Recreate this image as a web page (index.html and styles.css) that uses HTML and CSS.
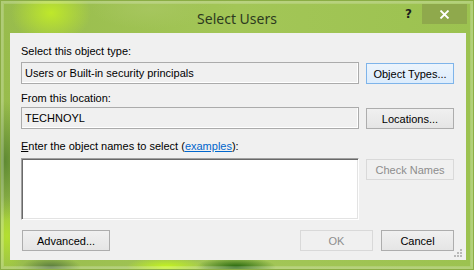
FILE: index.html
```html
<!DOCTYPE html>
<html lang="en">
<head>
    <meta charset="UTF-8">
    <title>Select Users</title>
    <link rel="stylesheet" href="styles.css">
</head>
<body>
    <div class="window">
        <div class="titlebar">
            <div></div>
            <div class="title">Select Users</div>
            <div class="controls">
                <span class="help">?</span>
                <span class="close">
                    <svg width="11" height="9" viewBox="0 0 11 9">
                        <path d="M1.5 0.5 L9.5 8.5 M9.5 0.5 L1.5 8.5" stroke="#fff" stroke-width="1.8" fill="none"/>
                    </svg>
                </span>
            </div>
        </div>

        <div class="client">
            <div class="label first">Select this object type:</div>
            <div class="row">
                <div class="field">Users or Built-in security principals</div>
                <button class="btn focused">Object Types...</button>
            </div>

            <div class="label second">From this location:</div>
            <div class="row">
                <div class="field">TECHNOYL</div>
                <button class="btn">Locations...</button>
            </div>

            <div class="label third"><u>E</u>nter the object names to select (<a href="#">examples</a>):</div>
            <div class="row">
                <div class="names"></div>
                <button class="btn" disabled>Check Names</button>
            </div>

            <div class="footer">
                <button class="btn advanced">Advanced...</button>
                <div class="actions">
                    <button class="btn small" disabled>OK</button>
                    <button class="btn small">Cancel</button>
                </div>
            </div>

            <svg class="grip" width="9" height="9" viewBox="0 0 9 9">
                <rect x="6" y="0" width="2" height="2" fill="#b9b9b9"/>
                <rect x="3" y="3" width="2" height="2" fill="#b9b9b9"/>
                <rect x="6" y="3" width="2" height="2" fill="#b9b9b9"/>
                <rect x="0" y="6" width="2" height="2" fill="#b9b9b9"/>
                <rect x="3" y="6" width="2" height="2" fill="#b9b9b9"/>
                <rect x="6" y="6" width="2" height="2" fill="#b9b9b9"/>
            </svg>
        </div>
    </div>
</body>
</html>
```

FILE: styles.css
```css
body {
    margin: 0;
    font-family: "Liberation Sans", Arial, sans-serif;
    font-size: 11px;
    color: #000;
}
.window {
    width: 474px;
    height: 270px;
    box-sizing: border-box;
    display: flex;
    flex-direction: column;
    /* fond vert Windows 8 */
    background:
        radial-gradient(ellipse 40px 30px at 50px 12px, #bfe82a, rgba(191, 232, 42, 0)),
        radial-gradient(ellipse 22px 60px at 4px 160px, #5f8a32, rgba(95, 138, 50, 0)),
        radial-gradient(ellipse 20px 40px at 6px 235px, #b4e030, rgba(180, 224, 48, 0)),
        radial-gradient(ellipse 30px 10px at 50px 266px, #587a3c, rgba(88, 122, 60, 0)),
        radial-gradient(ellipse 40px 10px at 165px 266px, #c4f41e, rgba(196, 244, 30, 0)),
        radial-gradient(ellipse 40px 10px at 235px 266px, #23640a, rgba(35, 100, 10, 0)),
        radial-gradient(ellipse 60px 20px at 150px 8px, #a6c65e, rgba(166, 198, 94, 0)),
        linear-gradient(90deg, #98bc4c, #a3c657 50%, #9cc250);
    border: 1px solid #8aad44;
    box-shadow: inset 0 0 0 2px rgba(255, 255, 255, 0.08), inset 0 0 0 3px rgba(255, 255, 255, 0.18);
}
.titlebar {
    height: 32px;
    display: grid;
    grid-template-columns: 1fr auto 1fr;
}
.title {
    font-family: "Noto Sans", sans-serif;
    font-size: 14px;
    color: #2d3a1f;
    padding-top: 8px;
}
.controls {
    display: flex;
    justify-content: flex-end;
    align-items: flex-start;
    padding-right: 6px;
}
.help {
    font-family: "DejaVu Sans", sans-serif;
    font-weight: bold;
    font-size: 12px;
    color: #1d1d1d;
    margin-top: 6px;
    margin-right: 10px;
}
.close {
    width: 45px;
    height: 20px;
    margin-top: 3px;
    background-color: #8fa94c;
    display: flex;
    justify-content: center;
    align-items: center;
}
.client {
    flex: 1;
    margin: 0 7px 9px 9px;
    padding: 12px 12px 0 11px;
    background-color: #f0f0f0;
    position: relative;
}
.label {
    line-height: 13px;
}
.label.first {
    margin-bottom: 4px;
}
.label.second {
    margin-top: 8px;
    margin-bottom: 2px;
}
.label.third {
    margin-top: 11px;
    margin-bottom: 5px;
}
.label a {
    color: #0066cc;
}
.row {
    display: flex;
    align-items: flex-start;
    gap: 7px;
}
.field {
    width: 338px;
    height: 22px;
    box-sizing: border-box;
    border: 1px solid #ababab;
    box-shadow: inset -1px -1px 0 #fff;
    padding: 3px 3px;
    line-height: 14px;
}
.names {
    width: 338px;
    height: 62px;
    box-sizing: border-box;
    background-color: #fff;
    border-top: 1px solid #a0a0a0;
    border-left: 1px solid #a0a0a0;
    border-bottom: 1px solid #fff;
    border-right: 1px solid #fff;
    box-shadow: inset 1px 1px 0 #696969, inset -1px -1px 0 #e3e3e3;
}
.btn {
    width: 88px;
    height: 21px;
    margin-top: 1px;
    box-sizing: border-box;
    font-family: "Liberation Sans", Arial, sans-serif;
    font-size: 11px;
    color: #000;
    border: 1px solid #adadad;
    background: linear-gradient(#f0f0f0, #e5e5e5);
    padding: 0;
}
.btn.focused {
    border-color: #7eb4ea;
    background: linear-gradient(#ecf4fc, #dcecfc);
}
.btn:disabled {
    color: #8d8d8d;
    border-color: #d9d9d9;
    background: #f0f0f0;
}
.footer {
    margin-top: 9px;
    display: flex;
    justify-content: space-between;
}
.advanced {
    margin-left: 1px;
}
.actions {
    display: flex;
    gap: 8px;
}
.btn.small {
    width: 73px;
}
.grip {
    position: absolute;
    right: 3px;
    bottom: 2px;
}
```
